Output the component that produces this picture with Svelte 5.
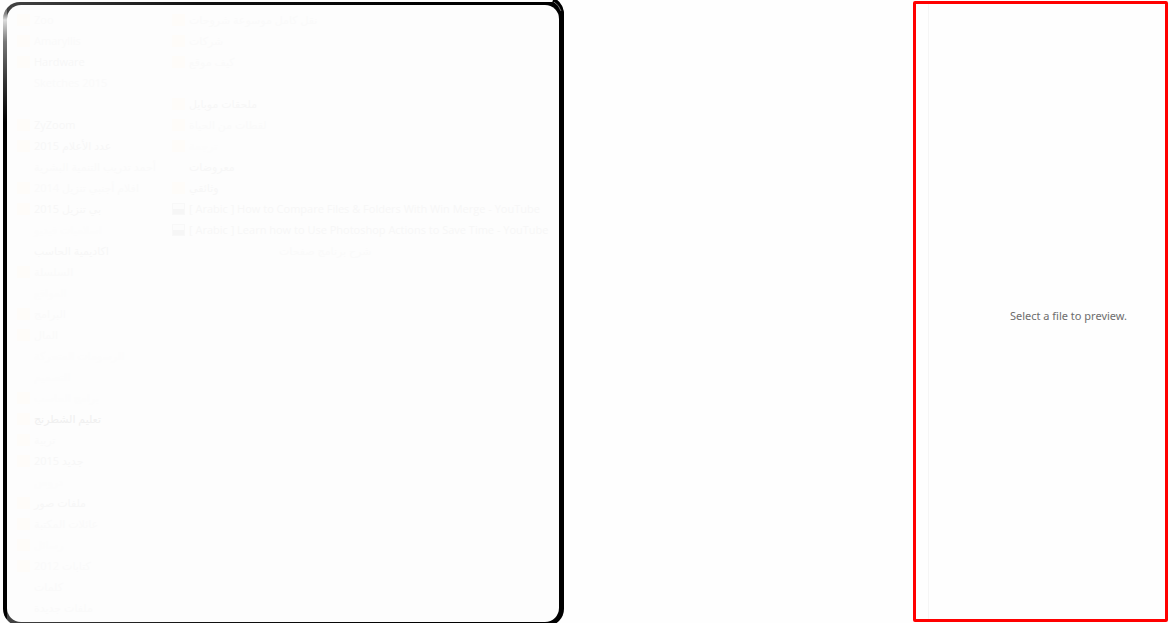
<script>
	// tone: 0 = nearly invisible, 3 = the darkest of the faded rows
	const folders = [
		{ name: 'Zoo', tone: 1, icon: true },
		{ name: 'Amaryllis', tone: 1, icon: true },
		{ name: 'Hardware', tone: 2, icon: true },
		{ name: 'Sketches 2015', tone: 1 },
		{ name: '', tone: 0 },
		{ name: 'ZyZoom', tone: 2, icon: true },
		{ name: 'عدد الأعلام 2015', tone: 2, icon: true },
		{ name: 'أحمد تدريب التنمية البشرية', tone: 1 },
		{ name: 'افلام أجنبي تنزيل 2014', tone: 1, icon: true },
		{ name: 'بي تنزيل 2015', tone: 2, icon: true },
		{ name: 'اسلاميات فيديو', tone: 0 },
		{ name: 'اكاديمية الحاسب', tone: 2 },
		{ name: 'السلسلة', tone: 1, icon: true },
		{ name: 'المواقع', tone: 0 },
		{ name: 'البرامج', tone: 1, icon: true },
		{ name: 'المال', tone: 1, icon: true },
		{ name: 'الرسومات المتحركة', tone: 0 },
		{ name: 'التصميم', tone: 0 },
		{ name: 'برامج الحاسب', tone: 0, icon: true },
		{ name: 'تعليم الشطرنج', tone: 3, icon: true },
		{ name: 'تربية', tone: 1, icon: true },
		{ name: 'جديد 2015', tone: 2, icon: true },
		{ name: 'دروس', tone: 0 },
		{ name: 'ملفات صور', tone: 2, icon: true },
		{ name: 'عائلات المكتبة', tone: 1, icon: true },
		{ name: 'رسائل', tone: 0, icon: true },
		{ name: 'كتابات 2012', tone: 1, icon: true },
		{ name: 'كلمات', tone: 1 },
		{ name: 'ملفات جديدة', tone: 1 }
	];

	const files = [
		{ name: 'نقل كامل موسوعة شروحات', tone: 1, icon: true },
		{ name: 'شركات', tone: 1, icon: true },
		{ name: 'كيف موقع', tone: 1, icon: true },
		{ name: '', tone: 0 },
		{ name: 'ملحقات موبايل', tone: 2, icon: true },
		{ name: 'لقطات من الحياة', tone: 1, icon: true },
		{ name: 'ترجمة', tone: 0, icon: true },
		{ name: 'معروضات', tone: 2 },
		{ name: 'وثائقي', tone: 2, icon: true },
		{ name: '[ Arabic ] How to Compare Files & Folders With Win Merge - YouTube', tone: 2, video: true },
		{ name: '[ Arabic ] Learn how to Use Photoshop Actions to Save Time - YouTube', tone: 2, video: true },
		{ name: 'شرح برنامج صفحات', tone: 1, late: true }
	];
</script>

<main class="explorer">
	<section class="frame">
		<svg class="corner" viewBox="0 0 16 16" aria-hidden="true">
			<path d="M5 1 Q13 4 14 15" />
			<path class="glint" d="M6 3 Q11 6 13 12" />
		</svg>
		<div class="sheet">
			{#each [folders, files] as list}
				<ul>
					{#each list as item}
						<li class="tone-{item.tone}" class:late={item.late}>
							<span class="icon" class:folder={item.icon} class:video={item.video}></span>
							<span class="name">{item.name}</span>
						</li>
					{/each}
				</ul>
			{/each}
		</div>
	</section>
	<aside class="preview">
		<p>Select a file to preview.</p>
	</aside>
</main>

<style>
	:global(body) {
		margin: 0;
		background: #fefefe;
	}
	.explorer {
		box-sizing: border-box;
		display: grid;
		grid-template-columns: 562fr 255fr;
		grid-template-rows: minmax(0, 1fr);
		column-gap: 30%;
		height: 100vh;
		padding: 1px 1px 0 3px;
		overflow: hidden;
		font-family: 'Open Sans', 'Noto Sans', 'DejaVu Sans', sans-serif;
	}
	.frame {
		position: relative;
		box-sizing: border-box;
		display: flex;
		height: calc(100vh + 1px);
		margin-top: 1px;
		padding: 3px 5px 4px 4px;
		border-radius: 17px 12px 17px 17px;
		background:
			linear-gradient(to bottom, #444 0, #888 12px, #ddd 18px, #777 40px, #333 80px, #000 120px) left / 4px 100% no-repeat,
			linear-gradient(to right, #444, #111 35%, #000 75%);
	}
	.corner {
		position: absolute;
		top: -3px;
		right: 0;
		width: 16px;
		height: 16px;
		fill: none;
		stroke: #000;
		stroke-width: 4;
	}
	.corner .glint {
		stroke: #777;
		stroke-width: 1;
	}
	.sheet {
		display: grid;
		grid-template-columns: 155px minmax(0, 1fr);
		flex: 1;
		min-width: 0;
		padding: 4px 8px 0 10px;
		border-radius: 14px;
		background: #fdfdfd;
		overflow: hidden;
	}
	ul {
		margin: 0;
		padding: 0;
		list-style: none;
	}
	li {
		display: flex;
		align-items: center;
		gap: 4px;
		height: 21px;
		font-size: 11px;
		line-height: 21px;
		white-space: nowrap;
	}
	.late {
		padding-left: 90px;
	}
	.tone-0 {
		color: #fcfcfc;
	}
	.tone-1 {
		color: #fafafa;
	}
	.tone-2 {
		color: #f7f7f7;
	}
	.tone-3 {
		color: #f0f0f0;
	}
	.icon {
		flex: none;
		width: 13px;
		height: 12px;
	}
	.folder {
		background: #fefcf9;
	}
	.video {
		box-sizing: border-box;
		border: 1px solid #f8f8f8;
		background: linear-gradient(#fcfcfc 50%, #f6f6f6 50%);
	}
	.preview {
		box-sizing: border-box;
		display: flex;
		margin-bottom: 1px;
		border: 3px solid #f00;
		border-radius: 2px;
		padding-left: 12px;
		background: #fefefe;
	}
	.preview p {
		display: flex;
		align-items: center;
		justify-content: flex-end;
		flex: 1;
		margin: 0;
		padding: 8px 38px 0 0;
		border-left: 1px solid #f5f5f5;
		color: #6d6d6d;
		font-family: 'Noto Sans', sans-serif;
		font-size: 11px;
		line-height: 16px;
	}
</style>
